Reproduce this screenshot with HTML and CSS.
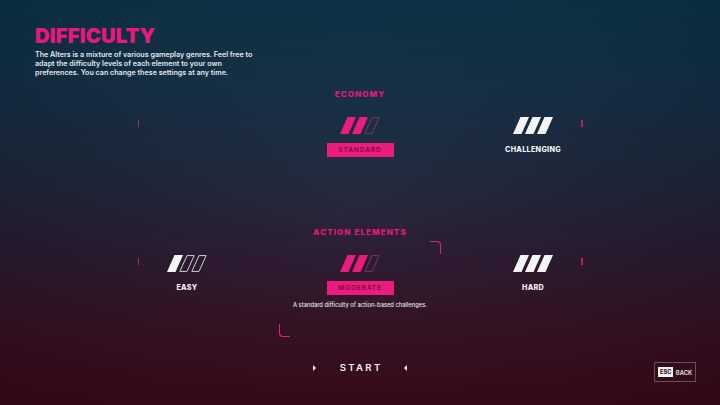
FILE: index.html
```html
<!DOCTYPE html>
<html>
<head>
<meta charset="utf-8">
<link rel="stylesheet" href="styles.css">
</head>
<body>
<div class="page">
  <header class="header">
    <h1 class="title">DIFFICULTY</h1>
    <p class="desc">The Alters is a mixture of various gameplay genres. Feel free to<br>adapt the difficulty levels of each element to your own<br>preferences. You can change these settings at any time.</p>
  </header>

  <section class="group group-economy">
    <div class="group-label">ECONOMY</div>
    <div class="row">
      <span class="marker"></span>
      <div class="option"></div>
      <div class="option">
        <svg class="stripes" width="40" height="17" viewBox="0 0 40 17">
          <polygon class="fill-pink" points="7.5,0 16,0 8.5,17 0,17"/>
          <polygon class="fill-pink" points="19.5,0 28,0 20.5,17 12,17"/>
          <polygon class="out-dim" points="32,0.6 39.2,0.6 32,16.4 24.8,16.4"/>
        </svg>
        <div class="badge">STANDARD</div>
      </div>
      <div class="option">
        <svg class="stripes" width="40" height="17" viewBox="0 0 40 17">
          <polygon class="fill-white" points="7.5,0 16,0 8.5,17 0,17"/>
          <polygon class="fill-white" points="19.5,0 28,0 20.5,17 12,17"/>
          <polygon class="fill-white" points="31.5,0 40,0 32.5,17 24,17"/>
        </svg>
        <div class="opt-label">CHALLENGING</div>
      </div>
      <span class="marker"></span>
    </div>
  </section>

  <section class="group group-action">
    <div class="group-label">ACTION ELEMENTS</div>
    <div class="row">
      <span class="marker"></span>
      <div class="option">
        <svg class="stripes" width="40" height="17" viewBox="0 0 40 17">
          <polygon class="fill-white" points="7.5,0 16,0 8.5,17 0,17"/>
          <polygon class="out-light" points="20,0.6 27.2,0.6 20,16.4 12.8,16.4"/>
          <polygon class="out-light" points="32,0.6 39.2,0.6 32,16.4 24.8,16.4"/>
        </svg>
        <div class="opt-label">EASY</div>
      </div>
      <div class="option option-focus">
        <span class="corner corner-tr"></span>
        <span class="corner corner-bl"></span>
        <svg class="stripes" width="40" height="17" viewBox="0 0 40 17">
          <polygon class="fill-pink" points="7.5,0 16,0 8.5,17 0,17"/>
          <polygon class="fill-pink" points="19.5,0 28,0 20.5,17 12,17"/>
          <polygon class="out-dim" points="32,0.6 39.2,0.6 32,16.4 24.8,16.4"/>
        </svg>
        <div class="badge">MODERATE</div>
        <div class="opt-desc">A standard difficulty of action-based challenges.</div>
      </div>
      <div class="option">
        <svg class="stripes" width="40" height="17" viewBox="0 0 40 17">
          <polygon class="fill-white" points="7.5,0 16,0 8.5,17 0,17"/>
          <polygon class="fill-white" points="19.5,0 28,0 20.5,17 12,17"/>
          <polygon class="fill-white" points="31.5,0 40,0 32.5,17 24,17"/>
        </svg>
        <div class="opt-label">HARD</div>
      </div>
      <span class="marker"></span>
    </div>
  </section>

  <footer class="footer">
    <div></div>
    <div class="start">
      <span class="tri tri-right"></span>
      <span class="start-text">START</span>
      <span class="tri tri-left"></span>
    </div>
    <div class="back">
      <span class="esc">ESC</span>
      <span class="back-text">BACK</span>
    </div>
  </footer>
</div>
</body>
</html>
```

FILE: styles.css
```css
* { box-sizing: border-box; }

html, body {
  margin: 0;
  padding: 0;
  width: 720px;
  height: 405px;
  overflow: hidden;
}

body {
  font-family: Inter, "Noto Sans", "Liberation Sans", sans-serif;
  background: #1d2338;
}

.page {
  position: relative;
  width: 720px;
  height: 405px;
  padding-top: 26px;
  background:
    radial-gradient(ellipse 75% 70% at 50% 50%, rgba(255,255,255,0.03), rgba(0,0,0,0.18)),
    linear-gradient(180deg, #0c374d 0%, #132f46 22%, #1d2439 45%, #28192f 62%, #341125 78%, #3d0918 100%);
}

.header {
  padding: 0 35px;
}

.title {
  margin: 0;
  font-size: 20.3px;
  line-height: 20px;
  font-weight: 900;
  color: #e8187c;
  letter-spacing: 0.1px;
}

.desc {
  margin: 4px 0 0;
  font-size: 7.15px;
  line-height: 9px;
  font-weight: 600;
  color: #e3e6ea;
}

.group-label {
  text-align: center;
  font-size: 8px;
  line-height: 10px;
  font-weight: 800;
  letter-spacing: 1.1px;
  color: #e8187c;
}

.group-economy { margin-top: 12px; }
.group-action { margin-top: 70px; }

.row {
  display: flex;
  justify-content: center;
  align-items: flex-start;
  margin-top: 18px;
}

.marker {
  width: 1.5px;
  height: 7px;
  margin-top: 3px;
  background: #b4236a;
}

.option {
  position: relative;
  width: 96px;
  display: flex;
  flex-direction: column;
  align-items: center;
}

.option + .option { margin-left: 77px; }

.stripes { display: block; }

.fill-pink { fill: #ec1b7e; }
.fill-white { fill: #f4f4f6; }
.out-dim { fill: none; stroke: #7a3a60; stroke-width: 1; }
.out-light { fill: none; stroke: #cfcfd4; stroke-width: 1; }

.badge {
  margin-top: 9px;
  width: 67px;
  height: 14px;
  background: #ec1c7f;
  color: #7c0d3c;
  font-size: 6.6px;
  font-weight: 600;
  letter-spacing: 0.9px;
  line-height: 14px;
  text-align: center;
}

.opt-label {
  margin-top: 9px;
  height: 14px;
  line-height: 14px;
  font-size: 7.2px;
  font-weight: 800;
  letter-spacing: 0.3px;
  color: #f2f2f4;
}

.opt-desc {
  margin-top: 6px;
  white-space: nowrap;
  font-size: 5.75px;
  line-height: 8px;
  font-weight: 500;
  color: #e1e1e6;
}

.corner {
  position: absolute;
  width: 11px;
  height: 13px;
  border-color: #e0207a;
  border-style: solid;
  border-width: 0;
}

.corner-tr {
  top: -14px;
  right: -33px;
  border-top-width: 1.5px;
  border-right-width: 1.5px;
  border-top-right-radius: 4px;
}

.corner-bl {
  top: 69px;
  left: -33px;
  border-bottom-width: 1.5px;
  border-left-width: 1.5px;
  border-bottom-left-radius: 4px;
}

.footer {
  position: absolute;
  left: 0;
  right: 0;
  top: 360px;
  display: grid;
  grid-template-columns: 1fr auto 1fr;
  align-items: start;
}

.start {
  display: flex;
  align-items: center;
  height: 16px;
  gap: 21px;
}

.start-text {
  color: #f3eef0;
  font-size: 9.6px;
  font-weight: 600;
  letter-spacing: 2.3px;
  padding-left: 2.3px;
  line-height: 16px;
}

.tri {
  width: 0;
  height: 0;
  border-top: 3px solid transparent;
  border-bottom: 3px solid transparent;
}

.tri-right { border-left: 3.5px solid #eeeaec; }
.tri-left { border-right: 3.5px solid #eeeaec; }

.back {
  justify-self: end;
  margin-right: 24px;
  margin-top: 2px;
  height: 20px;
  padding: 0 3px;
  display: flex;
  align-items: center;
  gap: 2.5px;
  border: 1px solid rgba(220, 200, 210, 0.35);
}

.esc {
  background: #f2f2f2;
  color: #3a0c1c;
  font-size: 5.6px;
  font-weight: 800;
  padding: 0 2px;
  height: 10px;
  line-height: 10px;
}

.back-text {
  color: #e8e4e6;
  font-size: 5.8px;
  font-weight: 600;
}
```
